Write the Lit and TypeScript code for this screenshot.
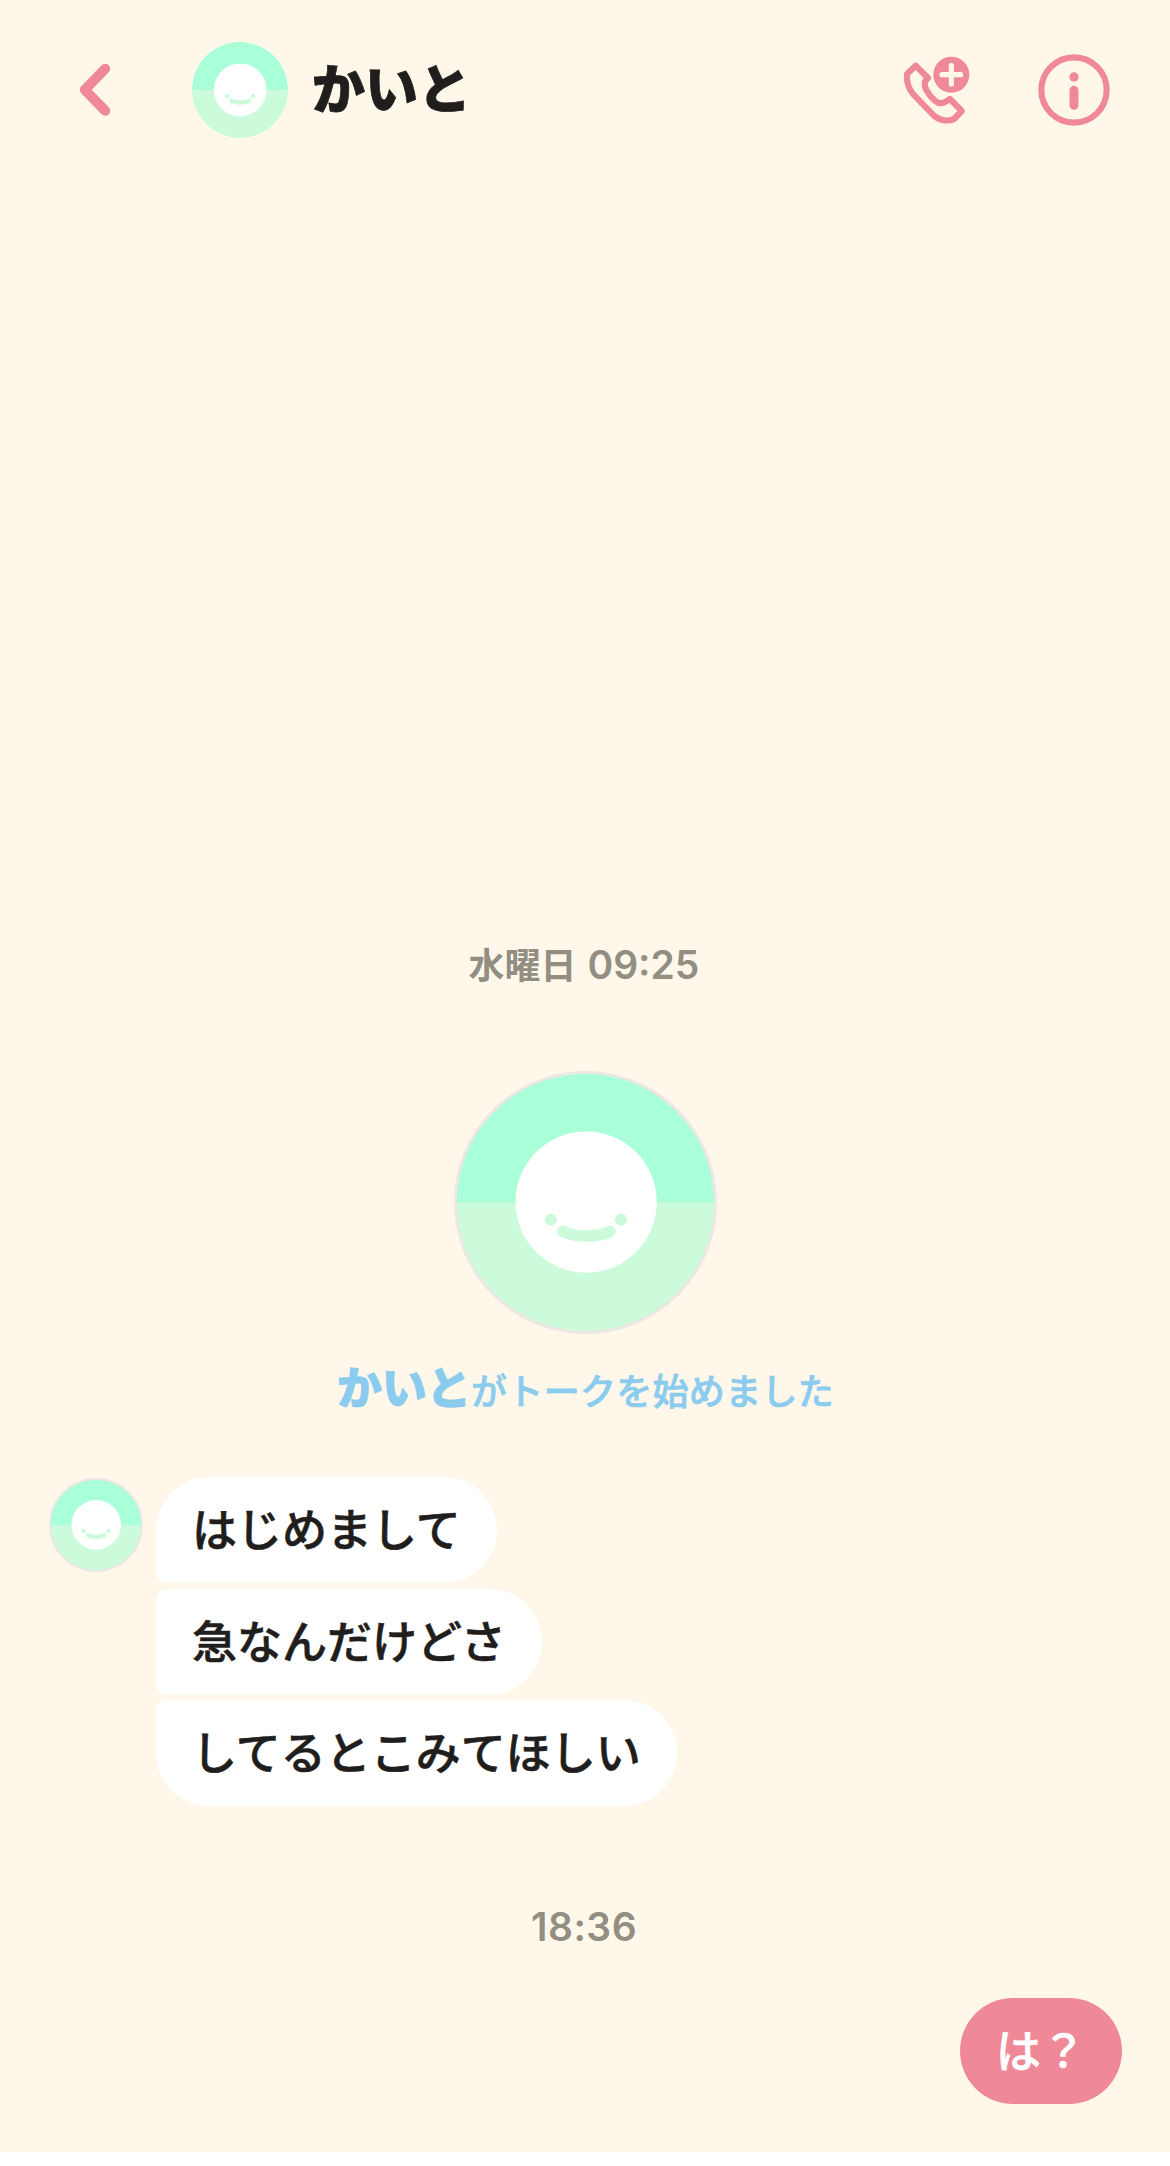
import { LitElement, html, css } from "lit";
import { customElement, property } from "lit/decorators.js";

@customElement("smile-avatar")
class SmileAvatar extends LitElement {
  @property({ type: Boolean, reflect: true }) ring = false;

  static styles = css`
    :host { display: block; flex: none; box-sizing: border-box; border-radius: 50%; }
    :host([ring]) { border: 2px solid #ebe7e3; background: #ebe7e3; }
    .art { display: block; width: 100%; height: 100%; }
  `;

  render() {
    return html`
      <svg class="art" viewBox="-129 -129 258 258">
        <path d="M-129 0A129 129 0 0 0 129 0Z" fill="#ccfbdc"></path>
        <path d="M-129 0A129 129 0 0 1 129 0Z" fill="#a8ffd8"></path>
        <circle cx="0.6" cy="-0.5" r="70.9" fill="#fff"></circle>
        <circle cx="-34.8" cy="17" r="6" fill="#ccfbdc"></circle>
        <circle cx="35.6" cy="17" r="6" fill="#ccfbdc"></circle>
        <path d="M-22.6 29C-15 33 -7 33.6 1 33.6S17 33 24.6 29" fill="none" stroke="#ccfbdc" stroke-width="11.6" stroke-linecap="round"></path>
      </svg>
    `;
  }
}

@customElement("app-root")
class AppRoot extends LitElement {
  private received = ["はじめまして", "急なんだけどさ", "してるとこみてほしい"];

  static styles = css`
    :host {
      display: block;
      font-family: Inter, "Noto Sans CJK JP", sans-serif;
      color: #1f1e1c;
    }
    .screen {
      box-sizing: border-box;
      height: 2166px;
      display: flex;
      flex-direction: column;
      background: #fff8ea;
      border-bottom: 14px solid #fff;
    }
    .bar {
      flex: none;
      height: 180px;
      box-sizing: border-box;
      padding: 0 60px 0 79px;
      display: flex;
      align-items: center;
    }
    .back { width: 32px; height: 54px; flex: none; }
    .bar smile-avatar { width: 96px; height: 96px; margin-left: 81px; }
    .name {
      margin: 0 auto 0 24px;
      font-size: 53px;
      line-height: 80px;
      font-weight: 900;
      -webkit-text-stroke: 0.8px currentColor;
    }
    .call { width: 68px; height: 70px; flex: none; margin-right: 68px; }
    .info { width: 72px; height: 72px; flex: none; }
    .talk {
      flex: 1;
      display: flex;
      flex-direction: column;
      justify-content: flex-end;
      padding: 0 48px 48px 49px;
    }
    .stamp {
      padding-right: 3px;
      text-align: center;
      font-size: 39px;
      line-height: 48px;
      font-weight: 600;
      color: #928f82;
    }
    .stamp .day { font-size: 36px; margin-right: 1px; }
    .intro {
      display: flex;
      flex-direction: column;
      align-items: center;
      margin: 81px 0 52px;
    }
    .intro smile-avatar { width: 263px; height: 263px; border-width: 3px; }
    .line {
      margin-top: 22px;
      font-size: 36px;
      line-height: 66px;
      font-weight: 500;
      letter-spacing: 0.3px;
      color: #8bcbee;
      white-space: nowrap;
      -webkit-text-stroke: 0.7px currentColor;
    }
    .line .who {
      font-size: 45px;
      font-weight: 900;
      letter-spacing: -0.3px;
      -webkit-text-stroke: 0.7px currentColor;
    }
    .group { display: flex; align-items: flex-start; gap: 13px; }
    .group smile-avatar { width: 94px; height: 94px; margin-top: 1px; }
    .stack {
      display: flex;
      flex-direction: column;
      align-items: flex-start;
      gap: 5.5px;
    }
    .bubble {
      box-sizing: border-box;
      height: 106px;
      padding: 0 36px;
      border-radius: 12px 53px 53px 12px;
      background: #fff;
      font-size: 45px;
      line-height: 108px;
      font-weight: 500;
      white-space: nowrap;
      -webkit-text-stroke: 0.6px currentColor;
    }
    .stack .bubble:first-child { border-top-left-radius: 53px; }
    .stack .bubble:last-child { border-bottom-left-radius: 53px; }
    .later { margin: 97px 0 47px; letter-spacing: 0.5px; }
    .bubble.mine {
      align-self: flex-end;
      border-radius: 53px;
      background: #f08997;
      color: #fff;
    }
  `;

  render() {
    return html`
      <div class="screen">
        <header class="bar">
          <svg class="back" viewBox="0 0 32 54" fill="none" stroke="#f08997" stroke-width="10" stroke-linecap="round" stroke-linejoin="round">
            <path d="M26.2 5.8L5.8 26.8L26.2 47.8"></path>
          </svg>
          <smile-avatar></smile-avatar>
          <div class="name">かいと</div>
          <svg class="call" viewBox="66 75 204 210">
            <path d="M107 107L144 144Q127 157 139 180Q149 199 166 213Q182 225 197 215L210 207L245 243L222 267Q212 273 193 271Q176 269 161 256L100 193Q78 168 81 132Z" fill="none" stroke="#f08997" stroke-width="18.5" stroke-linejoin="round"></path>
            <circle cx="214" cy="134" r="54" fill="#f08997"></circle>
            <path d="M214 106V162M186 134H242" stroke="#fff8ea" stroke-width="15.5" stroke-linecap="round"></path>
          </svg>
          <svg class="info" viewBox="-108 -108 216 216">
            <circle r="98" fill="none" stroke="#f08997" stroke-width="18.5"></circle>
            <circle cy="-39" r="14" fill="#f08997"></circle>
            <path d="M0 1V46" stroke="#f08997" stroke-width="27" stroke-linecap="round"></path>
          </svg>
        </header>
        <main class="talk">
          <div class="stamp"><span class="day">水曜日</span> 09:25</div>
          <section class="intro">
            <smile-avatar ring></smile-avatar>
            <div class="line"><span class="who">かいと</span>がトークを始めました</div>
          </section>
          <section class="group">
            <smile-avatar ring></smile-avatar>
            <div class="stack">
              ${this.received.map((t) => html`<div class="bubble">${t}</div>`)}
            </div>
          </section>
          <div class="stamp later">18:36</div>
          <div class="bubble mine">は？</div>
        </main>
      </div>
    `;
  }
}
